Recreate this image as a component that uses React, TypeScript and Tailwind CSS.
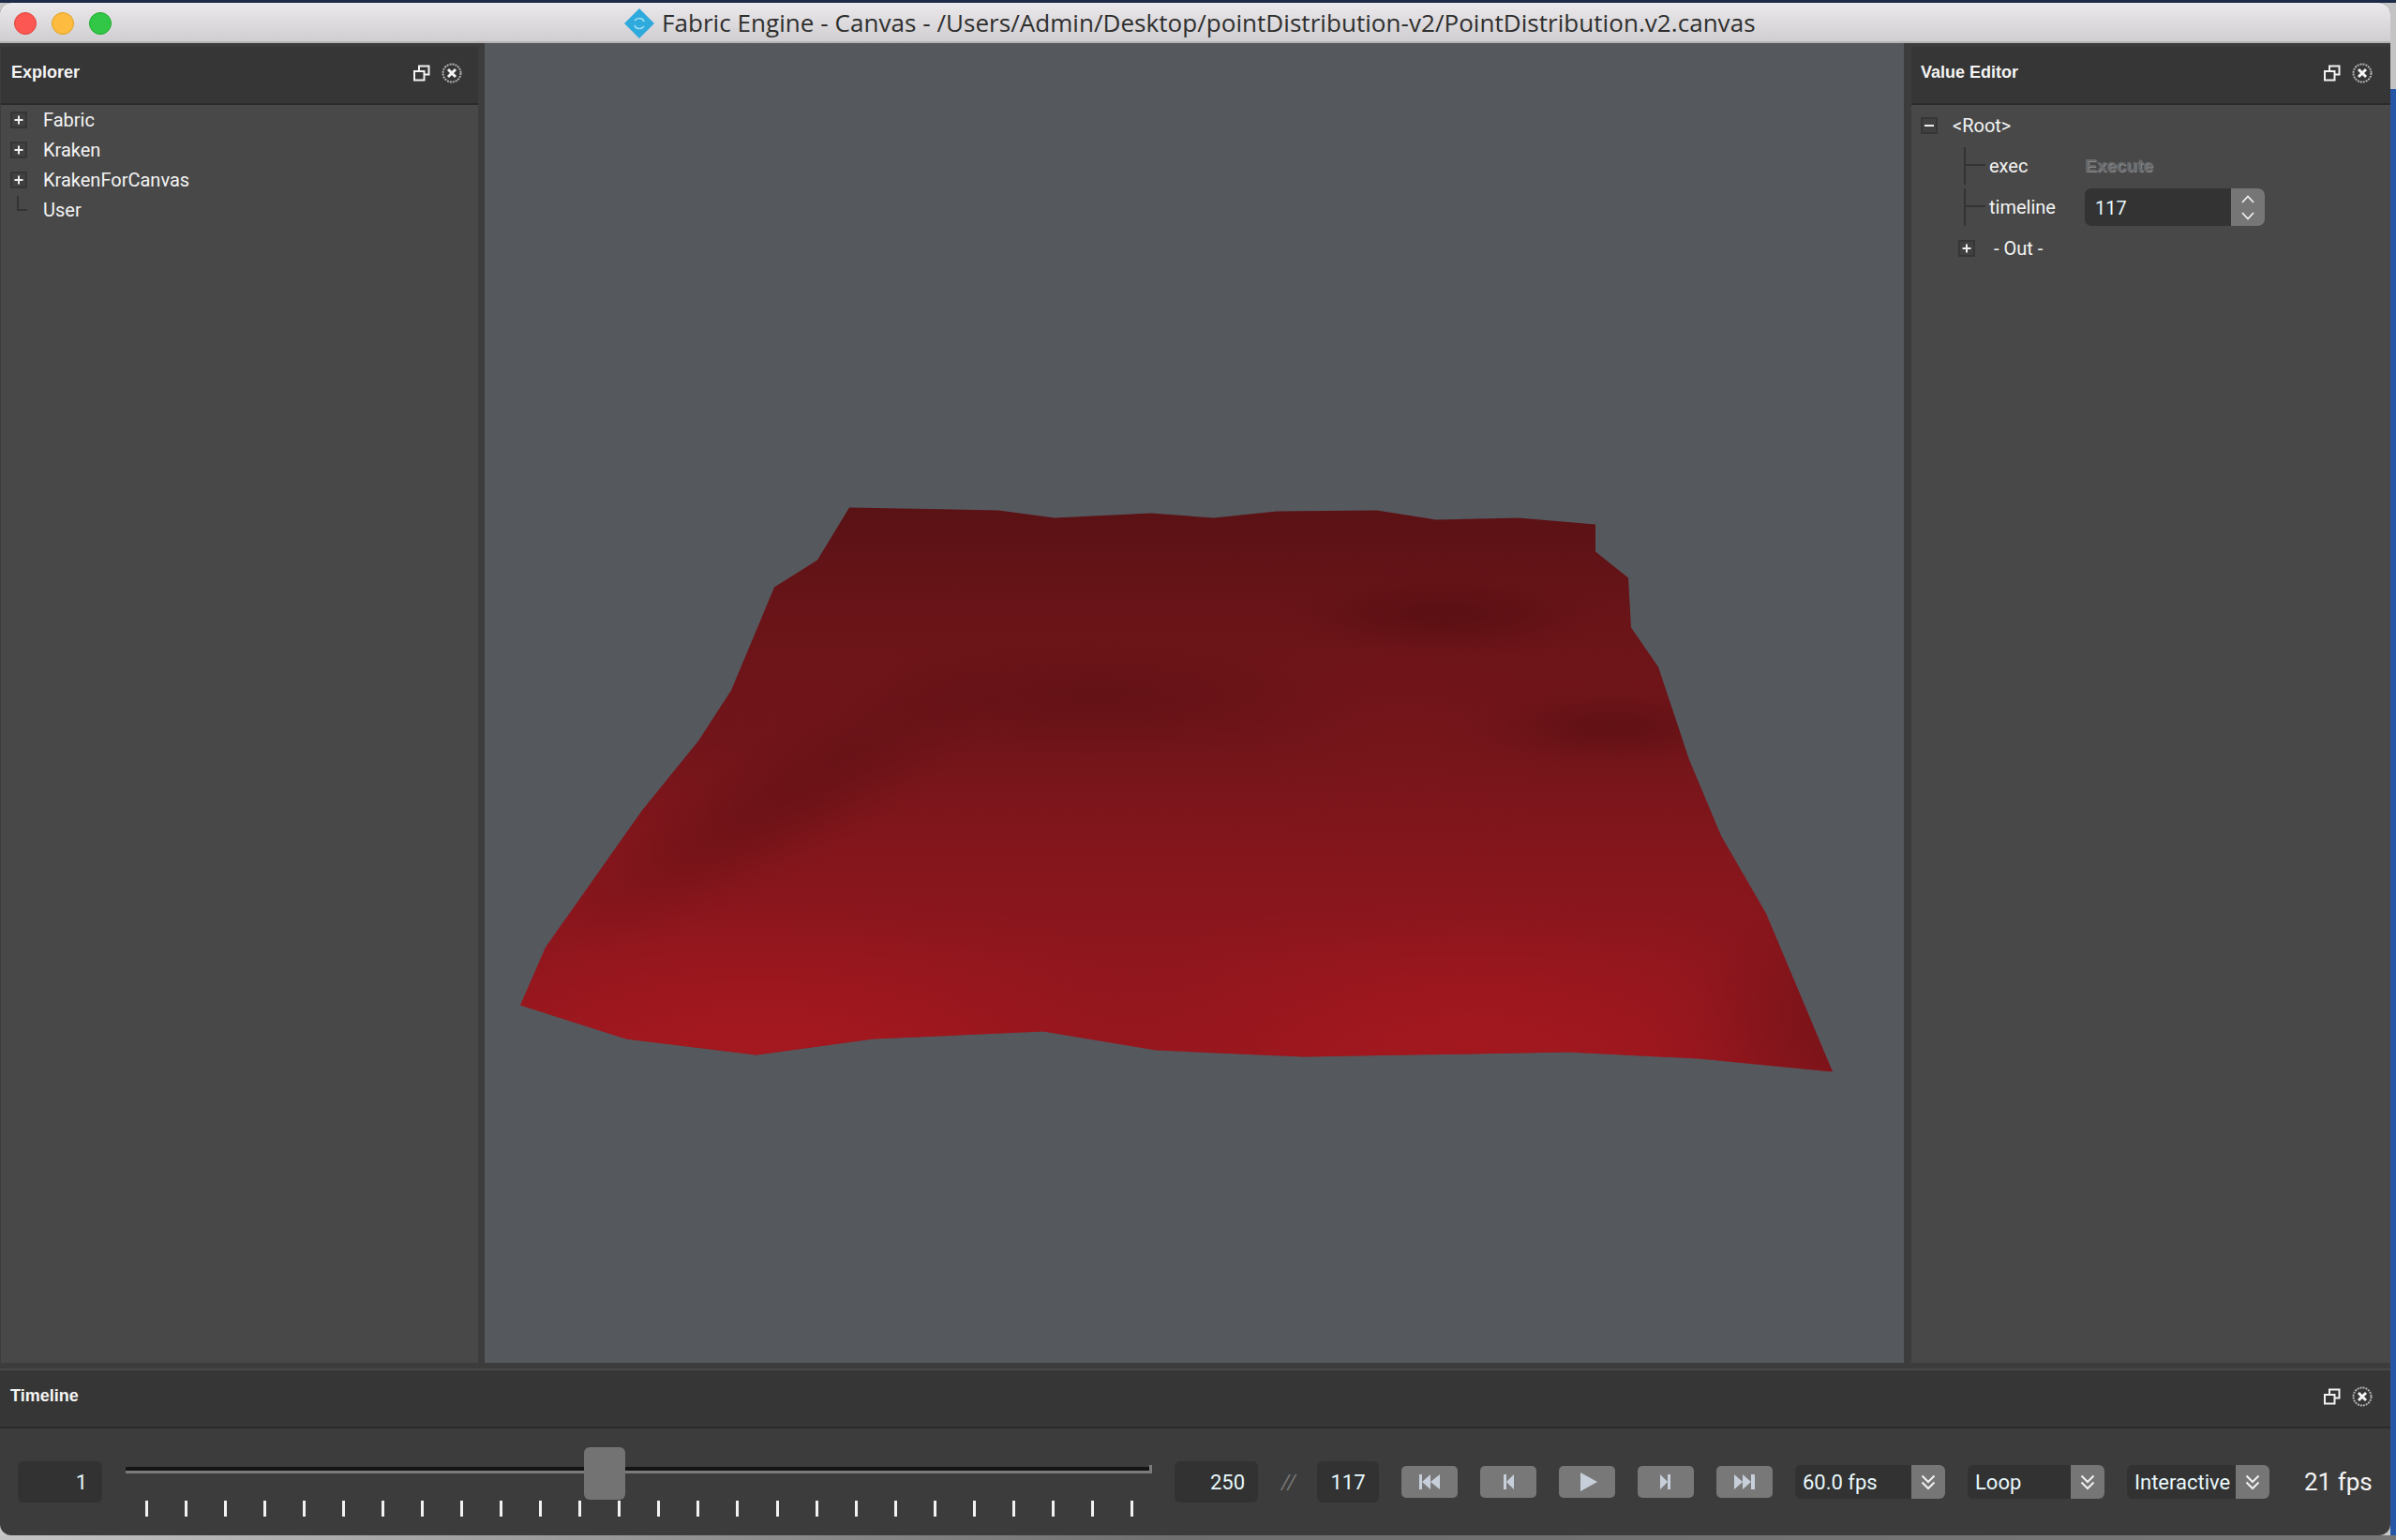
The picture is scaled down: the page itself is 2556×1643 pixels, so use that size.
import React from "react";

const POINTS = "906,541 1065,544 1125,552 1228,547 1295,552 1362,545 1469,544 1532,554 1620,552 1702,559 1702,588 1737,616 1740,669 1769,711 1802,810 1836,891 1884,974 1955,1143 1812,1129 1673,1122 1391,1127 1233,1120 1113,1100 931,1108 807,1125 668,1108 555,1072 582,1010 685,864 745,790 780,736 826,626 872,597";

function RestoreIcon() {
  return (
    <svg width="18" height="18" viewBox="0 0 18 18" fill="none" stroke="#f2f2f2" strokeWidth="2">
      <rect x="6" y="1.5" width="10.5" height="9" />
      <rect x="1" y="7" width="10.5" height="9.5" fill="#363636" />
    </svg>
  );
}

function CloseIcon() {
  return (
    <svg width="22" height="22" viewBox="0 0 22 22" fill="none">
      <circle cx="11" cy="11" r="9.5" stroke="#b5b5b5" strokeWidth="2" strokeDasharray="2 1" />
      <path d="M7 7 L15 15 M15 7 L7 15" stroke="#f5f5f5" strokeWidth="3" />
    </svg>
  );
}

function PanelHeader({ title, x = "pl-[11px]", r = "pr-[19px]" }: { title: string; x?: string; r?: string }) {
  return (
    <div className={`flex h-[62px] shrink-0 items-center justify-between border-b-2 border-[#2b2b2b] bg-[#363636] pb-[5px] ${x} ${r}`}>
      <span className="font-['Liberation_Sans'] text-[18px] font-bold text-[#f4f4f4]">{title}</span>
      <div className="flex items-center gap-[12px]">
        <RestoreIcon />
        <CloseIcon />
      </div>
    </div>
  );
}

function ExpandBox({ minus = false }: { minus?: boolean }) {
  return (
    <div className="flex h-[18px] w-[18px] shrink-0 items-center justify-center border-2 border-[#363636] bg-[#404040]">
      <svg width="12" height="12" viewBox="0 0 12 12" stroke="#eeeeee" strokeWidth="2">
        <path d={minus ? "M1 6 H11" : "M1.5 6 H10.5 M6 1.5 V10.5"} />
      </svg>
    </div>
  );
}

function ExplorerRow({ label, expand = true }: { label: string; expand?: boolean }) {
  return (
    <div className="flex h-[32px] items-center pl-[10px]">
      {expand ? (
        <ExpandBox />
      ) : (
        <div className="mb-[14px] ml-[7px] h-[16px] w-[11px] border-b-2 border-l-2 border-[#333333]" />
      )}
      <span className="ml-[17px] text-[20px] text-[#f4f4f4]">{label}</span>
    </div>
  );
}

function Chevron({ up = false, size = 14 }: { up?: boolean; size?: number }) {
  return (
    <svg width={size} height="9" viewBox="0 0 14 9" fill="none" stroke="#f0f0f0" strokeWidth="1.8">
      <path d={up ? "M1 8 L7 1.5 L13 8" : "M1 1 L7 7.5 L13 1"} />
    </svg>
  );
}

function DoubleChevron() {
  return (
    <svg width="16" height="17" viewBox="0 0 16 17" fill="none" stroke="#f0f0f0" strokeWidth="2">
      <path d="M1.5 1.5 L8 8 L14.5 1.5 M1.5 8.5 L8 15 L14.5 8.5" />
    </svg>
  );
}

function TreeLine() {
  return (
    <div className="relative ml-[56px] mr-[6px] h-[40px] w-[21px] shrink-0 border-l-2 border-[#333333]">
      <div className="absolute left-0 top-[18px] h-[2px] w-[21px] bg-[#333333]" />
    </div>
  );
}

function Field({ w, value, pr = "pr-[16px]" }: { w: string; value: string; pr?: string }) {
  return (
    <div className={`flex h-[44px] shrink-0 items-center justify-end rounded-[6px] bg-[#323232] text-[22px] text-[#e8f8fc] ${pr} ${w}`}>
      {value}
    </div>
  );
}

function TransportButton({ children }: { children: React.ReactNode }) {
  return (
    <div className="flex h-[34px] w-[60px] shrink-0 items-center justify-center rounded-[5px] bg-[#787878]">
      <svg width="26" height="20" viewBox="0 0 26 20" fill="#c7d0da">
        {children}
      </svg>
    </div>
  );
}

function Select({ w, label }: { w: string; label: string }) {
  return (
    <div className={`flex h-[36px] shrink-0 overflow-hidden rounded-[6px] bg-[#323232] ${w}`}>
      <div className="flex min-w-0 flex-1 items-center pl-[8px] text-[22px] text-[#e8f8fc]">{label}</div>
      <div className="flex w-[36px] shrink-0 items-center justify-center bg-[#767676]">
        <DoubleChevron />
      </div>
    </div>
  );
}

function Soft({ id, color }: { id: string; color: string }) {
  return (
    <radialGradient id={id}>
      <stop offset="0" stopColor={color} stopOpacity="1" />
      <stop offset="0.2" stopColor={color} stopOpacity="0.9" />
      <stop offset="0.4" stopColor={color} stopOpacity="0.65" />
      <stop offset="0.6" stopColor={color} stopOpacity="0.35" />
      <stop offset="0.8" stopColor={color} stopOpacity="0.1" />
      <stop offset="1" stopColor={color} stopOpacity="0" />
    </radialGradient>
  );
}

function Mesh() {
  return (
    <svg className="h-full w-full" viewBox="517 46 1514 1407">
      <defs>
        <linearGradient id="cloth" x1="0" y1="541" x2="0" y2="1143" gradientUnits="userSpaceOnUse">
          <stop offset="0" stopColor="#5a1215" />
          <stop offset="0.2" stopColor="#6a1418" />
          <stop offset="0.42" stopColor="#72151a" />
          <stop offset="0.6" stopColor="#83161c" />
          <stop offset="0.8" stopColor="#8f161d" />
          <stop offset="1" stopColor="#96161e" />
        </linearGradient>
        <clipPath id="clothClip">
          <polygon points={POINTS} />
        </clipPath>
        <Soft id="bright" color="#a5181f" />
        <Soft id="dark" color="#560e11" />
        <Soft id="edge" color="#5e1115" />
        <Soft id="mid" color="#7e161c" />
      </defs>
      <polygon points={POINTS} fill="url(#cloth)" />
      <g clipPath="url(#clothClip)">
        <ellipse cx="810" cy="1125" rx="480" ry="180" fill="url(#bright)" opacity="0.95" />
        <ellipse cx="1570" cy="1120" rx="430" ry="170" fill="url(#bright)" opacity="0.85" />
        <ellipse cx="1540" cy="656" rx="190" ry="46" fill="url(#dark)" opacity="0.7" />
        <ellipse cx="1720" cy="775" rx="160" ry="46" fill="url(#dark)" opacity="0.55" />
        <ellipse cx="1170" cy="745" rx="300" ry="70" fill="url(#dark)" opacity="0.4" />
        <ellipse cx="840" cy="850" rx="320" ry="80" fill="url(#dark)" opacity="0.4" transform="rotate(-30 840 850)" />
        <ellipse cx="1980" cy="1100" rx="220" ry="190" fill="url(#edge)" opacity="0.5" />
        <ellipse cx="1500" cy="800" rx="170" ry="150" fill="url(#mid)" opacity="0.3" />
      </g>
    </svg>
  );
}

export default function App() {
  const ticks = Array.from({ length: 26 }, (_, i) => i);
  return (
    <div className="flex h-[1643px] w-[2556px] flex-col overflow-hidden bg-[#c9c9c9] font-['Roboto',sans-serif]">
      <div className="h-[3px] shrink-0 bg-[#1b2b48]" />
      <div className="flex min-h-0 flex-1">
        {/* window */}
        <div className="flex w-[2550px] shrink-0 flex-col overflow-hidden rounded-b-[12px] rounded-t-[12px] bg-[#3c3c3c]">
          {/* title bar */}
          <div className="flex h-[43px] shrink-0 items-center border-b-2 border-[#b4b4b4] bg-gradient-to-b from-[#ebe9eb] to-[#d0ced0] pt-[2px]">
            <div className="ml-[15px] flex items-center gap-[16px]">
              <div className="h-[24px] w-[24px] rounded-full border border-[#e0443e] bg-[#fc5753]" />
              <div className="h-[24px] w-[24px] rounded-full border border-[#dea123] bg-[#fdbc40]" />
              <div className="h-[24px] w-[24px] rounded-full border border-[#1aab29] bg-[#33c748]" />
            </div>
            <svg className="ml-[547px] shrink-0" width="32" height="32" viewBox="0 0 32 32">
              <polygon points="16,0 32,16 16,32 0,16" fill="#2faadd" />
              <path d="M11 13 C14 9 20 10 21 14 M21 19 C18 23 12 22 11 18" stroke="#9fdcf2" strokeWidth="1.6" fill="none" />
            </svg>
            <span className="ml-[8px] whitespace-nowrap font-['Open_Sans'] text-[26px] tracking-[0.05px] text-[#2e2e2e]">
              Fabric Engine - Canvas - /Users/Admin/Desktop/pointDistribution-v2/PointDistribution.v2.canvas
            </span>
          </div>

          {/* main row */}
          <div className="flex h-[1408px] shrink-0">
            <div className="flex w-[510px] shrink-0 flex-col pl-[1px] pt-[4px]">
              <PanelHeader title="Explorer" r="pr-[17px]" />
              <div className="flex-1 bg-[#484848]">
                <ExplorerRow label="Fabric" />
                <ExplorerRow label="Kraken" />
                <ExplorerRow label="KrakenForCanvas" />
                <ExplorerRow label="User" expand={false} />
              </div>
            </div>
            <div className="ml-[7px] mr-[8px] min-w-0 flex-1 bg-[#55585d]">
              <Mesh />
            </div>
            <div className="flex w-[511px] shrink-0 flex-col pt-[4px]">
              <PanelHeader title="Value Editor" x="pl-[10px]" />
              <div className="flex-1 bg-[#484848] pt-[13px]">
                <div className="flex h-[18px] items-center pl-[10px]">
                  <ExpandBox minus />
                  <span className="ml-[16px] text-[20px] text-[#f4f4f4]">&lt;Root&gt;</span>
                </div>
                <div className="mt-[14px] flex h-[40px] items-center">
                  <TreeLine />
                  <span className="w-[102px] text-[20px] text-[#f4f4f4]">exec</span>
                  <span className="font-['Liberation_Sans'] text-[19px] font-bold text-[#6a6a6a] [text-shadow:1px_1px_1px_#8f8f8f]">Execute</span>
                </div>
                <div className="mt-[4px] flex h-[40px] items-center">
                  <TreeLine />
                  <span className="w-[102px] text-[20px] text-[#f4f4f4]">timeline</span>
                  <div className="flex h-[40px] w-[192px] overflow-hidden rounded-[7px] bg-[#333333]">
                    <div className="flex flex-1 items-center pl-[11px] pt-[2px] text-[20px] text-[#e8f8fc]">117</div>
                    <div className="flex w-[36px] flex-col items-center justify-center gap-[9px] bg-[#767676]">
                      <Chevron up />
                      <Chevron />
                    </div>
                  </div>
                </div>
                <div className="mt-[15px] flex h-[18px] items-center pl-[50px]">
                  <ExpandBox />
                  <span className="ml-[20px] text-[20px] text-[#f4f4f4]">- Out -</span>
                </div>
              </div>
            </div>
          </div>

          {/* timeline */}
          <div className="flex min-h-0 flex-1 flex-col">
            <div className="mt-[6px] h-[2px] shrink-0 bg-[#484848]" />
            <PanelHeader title="Timeline" />
            <div className="flex min-h-0 flex-1 items-center gap-[24px] pl-[19px]">
              <Field w="w-[90px]" value="1" />
              <div className="relative ml-[1px] h-[74px] w-[1095px] shrink-0">
                <div className="mt-[19px] h-[9px] border-b-[3px] border-r-[3px] border-[#7c7c7c] pt-[2px]">
                  <div className="h-[4px] bg-[#141414]" />
                </div>
                <div className="mt-[29px] flex justify-between pl-[21px] pr-[20px]">
                  {ticks.map((t) => (
                    <div key={t} className="h-[17px] w-[3px] bg-[#f2f2f2]" />
                  ))}
                </div>
                <div className="absolute left-[489px] top-0 h-[56px] w-[44px] rounded-[6px] bg-[#737373]" />
              </div>
              <Field w="w-[89px]" value="250" pr="pr-[14px]" />
              <span className="ml-[1px] w-[14px] shrink-0 text-center text-[22px] italic text-[#777777]">//</span>
              <div className="flex h-[44px] w-[66px] shrink-0 items-center justify-center rounded-[6px] bg-[#323232] text-[22px] text-[#e8f8fc]">117</div>
              <div className="flex gap-[24px]">
                <TransportButton>
                  <path d="M2 2 H5 V18 H2 Z M5 10 L14 2 V18 Z M14 10 L24 2 V18 Z" />
                </TransportButton>
                <TransportButton>
                  <path d="M8 2 H11 V18 H8 Z M11 10 L19 2 V18 Z" />
                </TransportButton>
                <TransportButton>
                  <path d="M6 0 L24 10 L6 20 Z" />
                </TransportButton>
                <TransportButton>
                  <path d="M7 2 L15 10 L7 18 Z M15 2 H18 V18 H15 Z" />
                </TransportButton>
                <TransportButton>
                  <path d="M2 2 L11 10 L2 18 Z M11 2 L20 10 L11 18 Z M20 2 H24 V18 H20 Z" />
                </TransportButton>
              </div>
              <Select w="w-[160px]" label="60.0 fps" />
              <Select w="w-[146px]" label="Loop" />
              <Select w="w-[152px]" label="Interactive" />
              <span className="ml-[13px] whitespace-nowrap text-[26px] text-[#f4f4f4]">21 fps</span>
            </div>
          </div>
        </div>

        {/* desktop behind the window, right edge */}
        <div className="flex w-[6px] shrink-0 flex-col">
          <div className="h-[92px] shrink-0 bg-[#c4c4c4]" />
          <div className="flex-1 bg-[#2556a6]" />
        </div>
      </div>
      <div className="h-[5px] shrink-0 bg-gradient-to-r from-[#c4c4c4] via-[#6e6e6e] to-[#777777]" />
    </div>
  );
}
